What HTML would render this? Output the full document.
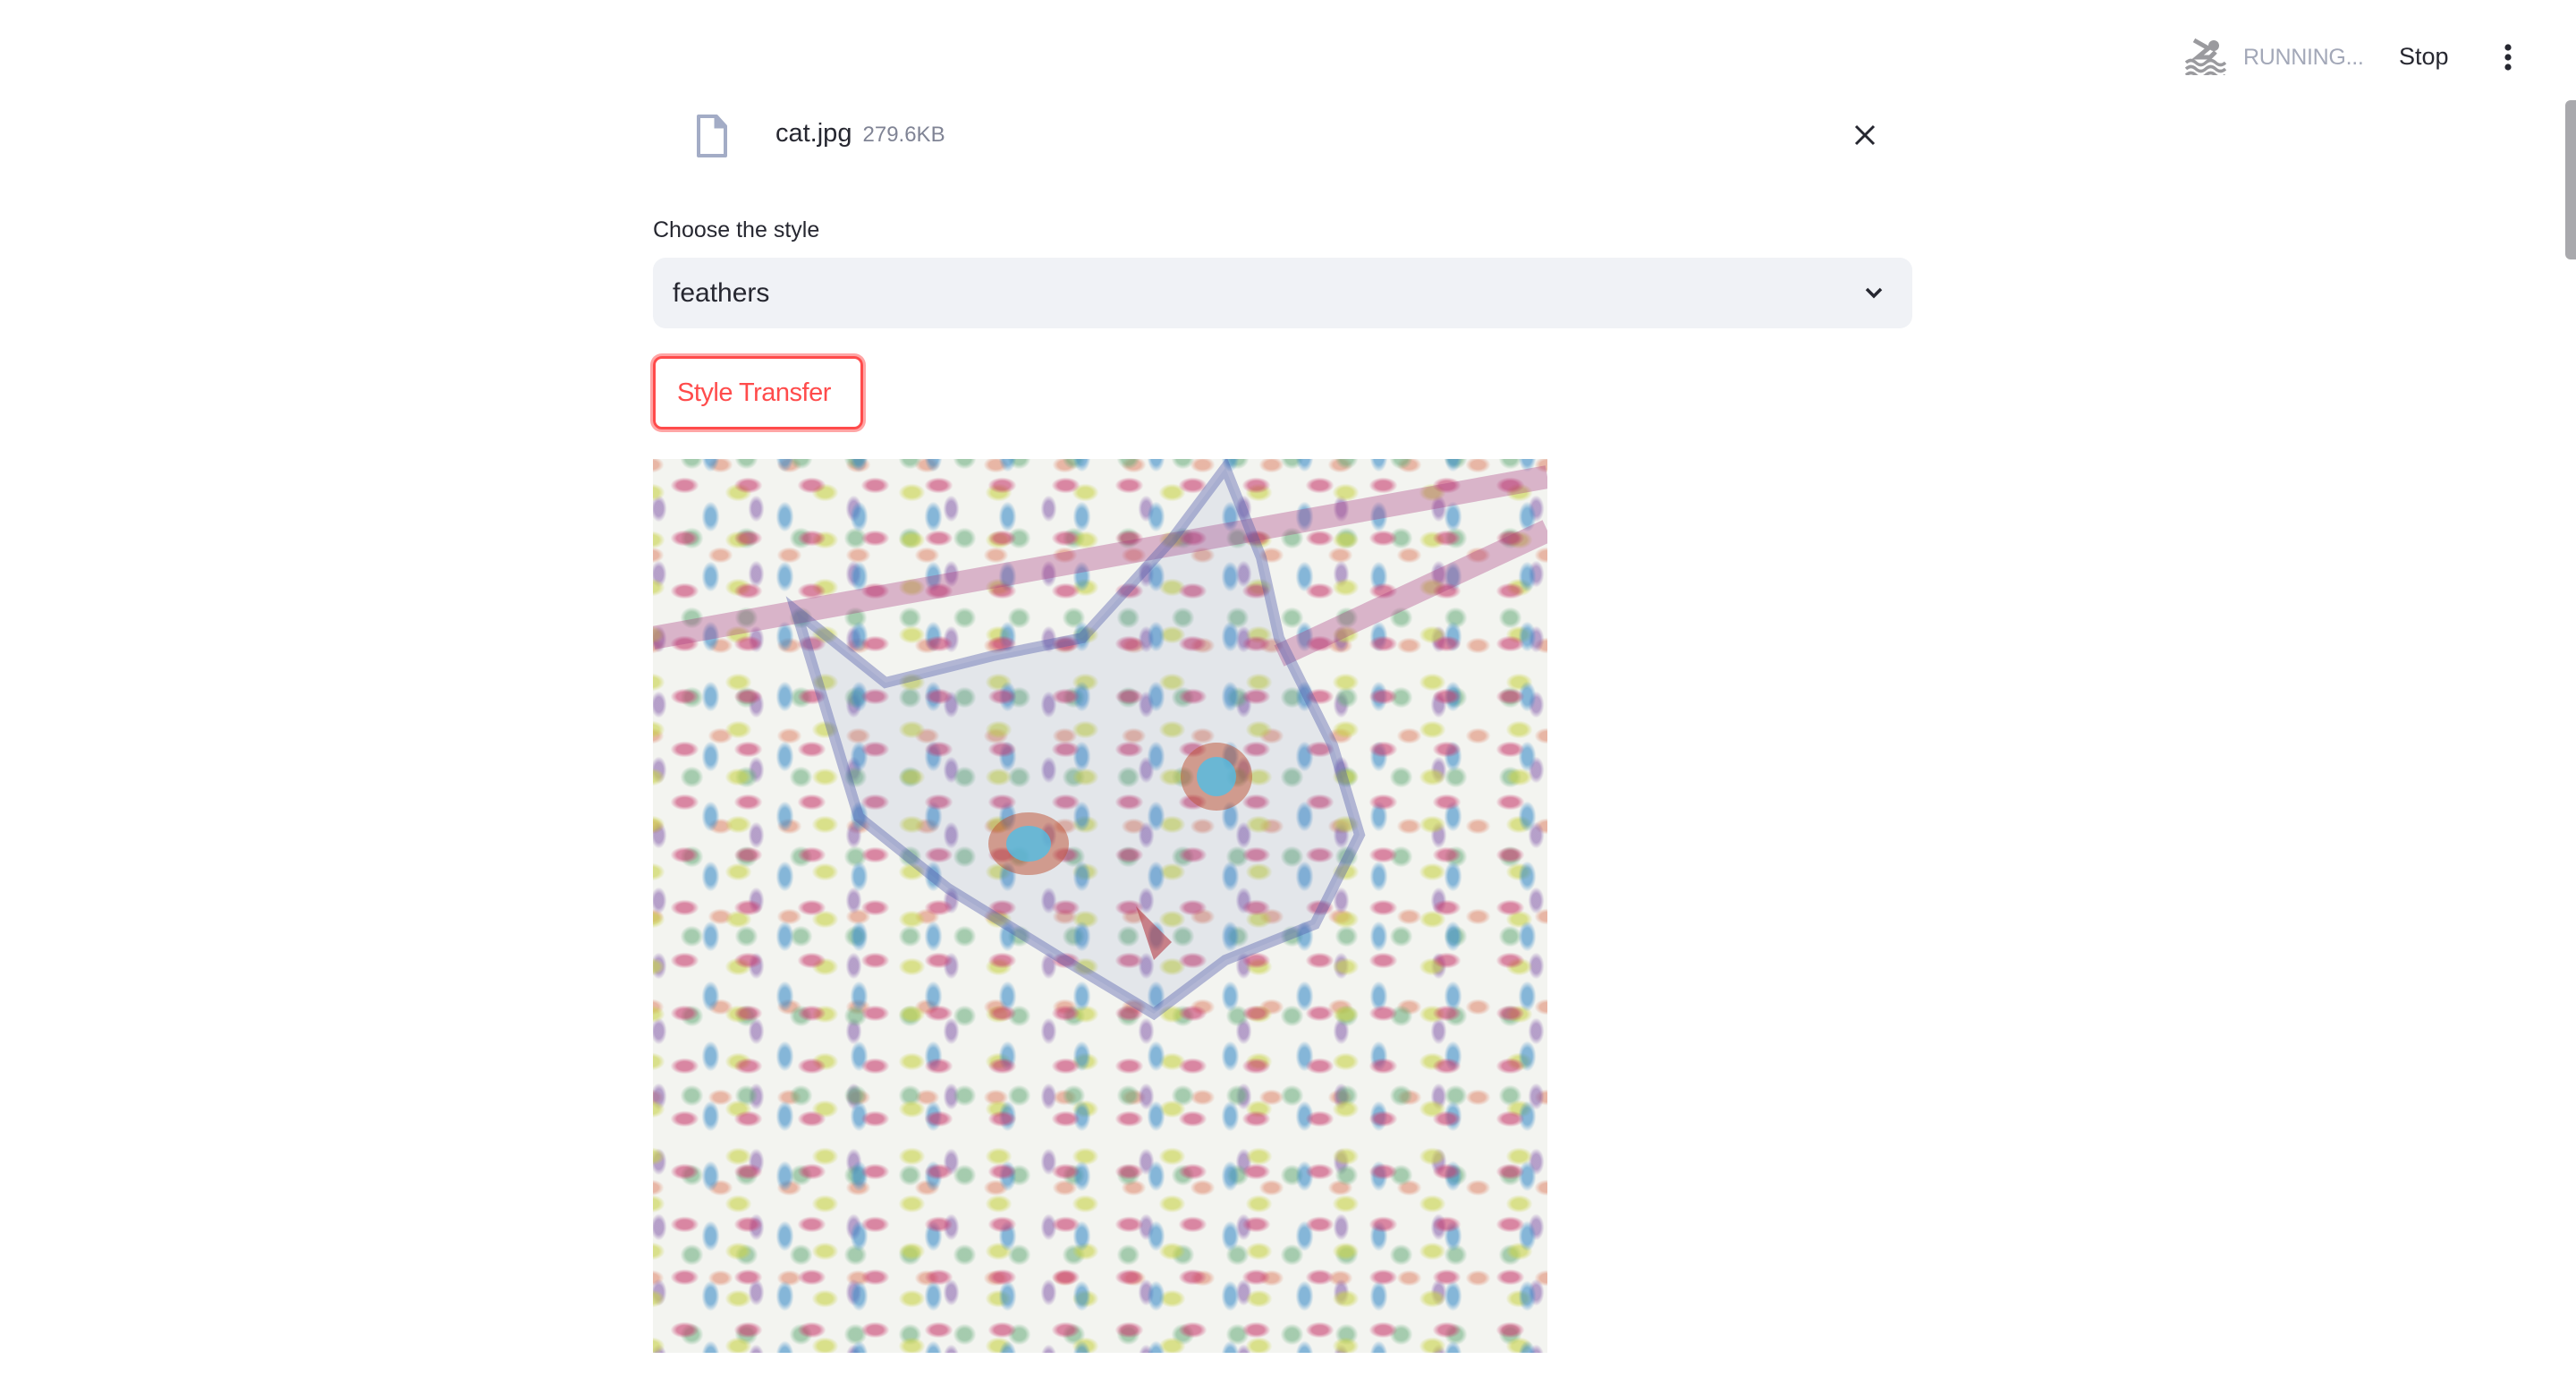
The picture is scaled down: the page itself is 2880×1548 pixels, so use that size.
<!DOCTYPE html>
<html><head><meta charset="utf-8"><style>
html,body{margin:0;padding:0;background:#fff;width:2880px;height:1548px;overflow:hidden;font-family:"Liberation Sans",sans-serif;}
.abs{position:absolute}
.img{left:730px;top:513px;width:1000px;height:999px;background-color:#f3f4f0;
background-image:
radial-gradient(ellipse 16px 9px,rgba(200,60,110,.6) 55%,transparent 100%),
radial-gradient(ellipse 10px 17px,rgba(60,140,200,.6) 55%,transparent 100%),
radial-gradient(ellipse 15px 10px,rgba(200,210,70,.6) 55%,transparent 100%),
radial-gradient(ellipse 13px 12px,rgba(100,170,120,.55) 55%,transparent 100%),
radial-gradient(ellipse 9px 15px,rgba(130,90,170,.55) 55%,transparent 100%),
radial-gradient(ellipse 14px 9px,rgba(220,120,90,.5) 55%,transparent 100%);
background-size:71px 59px,83px 67px,97px 53px,61px 89px,109px 73px,77px 101px;
background-position:0 0,23px 31px,47px 11px,13px 44px,61px 19px,37px 57px;}
</style></head><body>
<svg class="abs" style="left:2443px;top:42px" width="46" height="42" viewBox="0 0 46 42">
<circle cx="32" cy="9" r="6" fill="#9a9a9e"/>
<path d="M10 3 L26 12 L14 22 L28 22 L34 16" stroke="#9a9a9e" stroke-width="5" fill="none"/>
<path d="M1 28 q5.5 -5 11 0 t11 0 t11 0 t11 0 M1 35 q5.5 -5 11 0 t11 0 t11 0 t11 0 M1 42 q5.5 -5 11 0 t11 0 t11 0 t11 0" stroke="#9a9a9e" stroke-width="3.5" fill="none"/>
</svg>
<div class="abs" style="left:2508px;top:50px;font-size:25px;color:#a3a8b8;letter-spacing:-0.3px">RUNNING...</div>
<div class="abs" style="left:2682px;top:48px;font-size:27px;color:#262730;">Stop</div>
<svg class="abs" style="left:2794px;top:48px" width="20" height="32"><circle cx="10" cy="5" r="3.6" fill="#262730"/><circle cx="10" cy="16" r="3.6" fill="#262730"/><circle cx="10" cy="27" r="3.6" fill="#262730"/></svg>
<div class="abs" style="left:2868px;top:112px;width:12px;height:178px;background:#a9a9ad;border-radius:6px 0 0 6px"></div>
<svg class="abs" style="left:778px;top:127px" width="36" height="50" viewBox="0 0 36 50"><path d="M3 3 H23 L33 14 V47 H3 Z" fill="none" stroke="#a3acc6" stroke-width="4" stroke-linejoin="round"/><path d="M22 3 V15 H33" fill="#a3acc6" stroke="#a3acc6" stroke-width="3"/></svg>
<div class="abs" style="left:867px;top:133px;font-size:29px;color:#262730;">cat.jpg <span style="font-size:24px;color:#808495;margin-left:4px">279.6KB</span></div>
<svg class="abs" style="left:2072px;top:138px" width="26" height="26"><path d="M3 3 L23 23 M23 3 L3 23" stroke="#262730" stroke-width="3"/></svg>
<div class="abs" style="left:730px;top:243px;font-size:25px;color:#262730;">Choose the style</div>
<div class="abs" style="left:730px;top:288px;width:1408px;height:79px;background:#f0f2f6;border-radius:14px"></div>
<div class="abs" style="left:752px;top:311px;font-size:30px;color:#262730;">feathers</div>
<svg class="abs" style="left:2084px;top:320px" width="22" height="16"><path d="M3 3 L11 11 L19 3" stroke="#262730" stroke-width="3.5" fill="none"/></svg>
<div class="abs" style="left:730px;top:398px;width:229px;height:76px;border:3px solid #ff4b4b;border-radius:10px;box-shadow:0 0 0 3px rgba(255,75,75,.5);"></div>
<div class="abs" style="left:757px;top:423px;font-size:29px;color:#ff4b4b;letter-spacing:-0.5px">Style Transfer</div>
<div class="abs img"></div>
<svg class="abs" style="left:730px;top:513px" width="1000" height="999" viewBox="0 0 1000 999">
<path d="M0 200 L1000 20" stroke="rgba(170,60,130,.35)" stroke-width="26"/>
<path d="M700 220 L1000 80" stroke="rgba(170,60,130,.35)" stroke-width="26"/>
<path d="M160 170 L260 250 L380 220 L480 200 L580 90 L640 10 L680 110 L700 200 L760 320 L790 420 L740 520 L640 560 L560 620 L460 560 L330 480 L230 400 Z" fill="rgba(90,110,190,.1)" stroke="rgba(80,90,170,.4)" stroke-width="12"/>
<ellipse cx="420" cy="430" rx="45" ry="35" fill="rgba(190,80,50,.5)"/>
<ellipse cx="420" cy="430" rx="25" ry="20" fill="rgba(80,190,230,.8)"/>
<ellipse cx="630" cy="355" rx="40" ry="38" fill="rgba(190,80,50,.5)"/>
<ellipse cx="630" cy="355" rx="22" ry="22" fill="rgba(80,190,230,.8)"/>
<path d="M540 500 L580 540 L560 560 Z" fill="rgba(180,60,70,.6)"/>
</svg>
</body></html>
